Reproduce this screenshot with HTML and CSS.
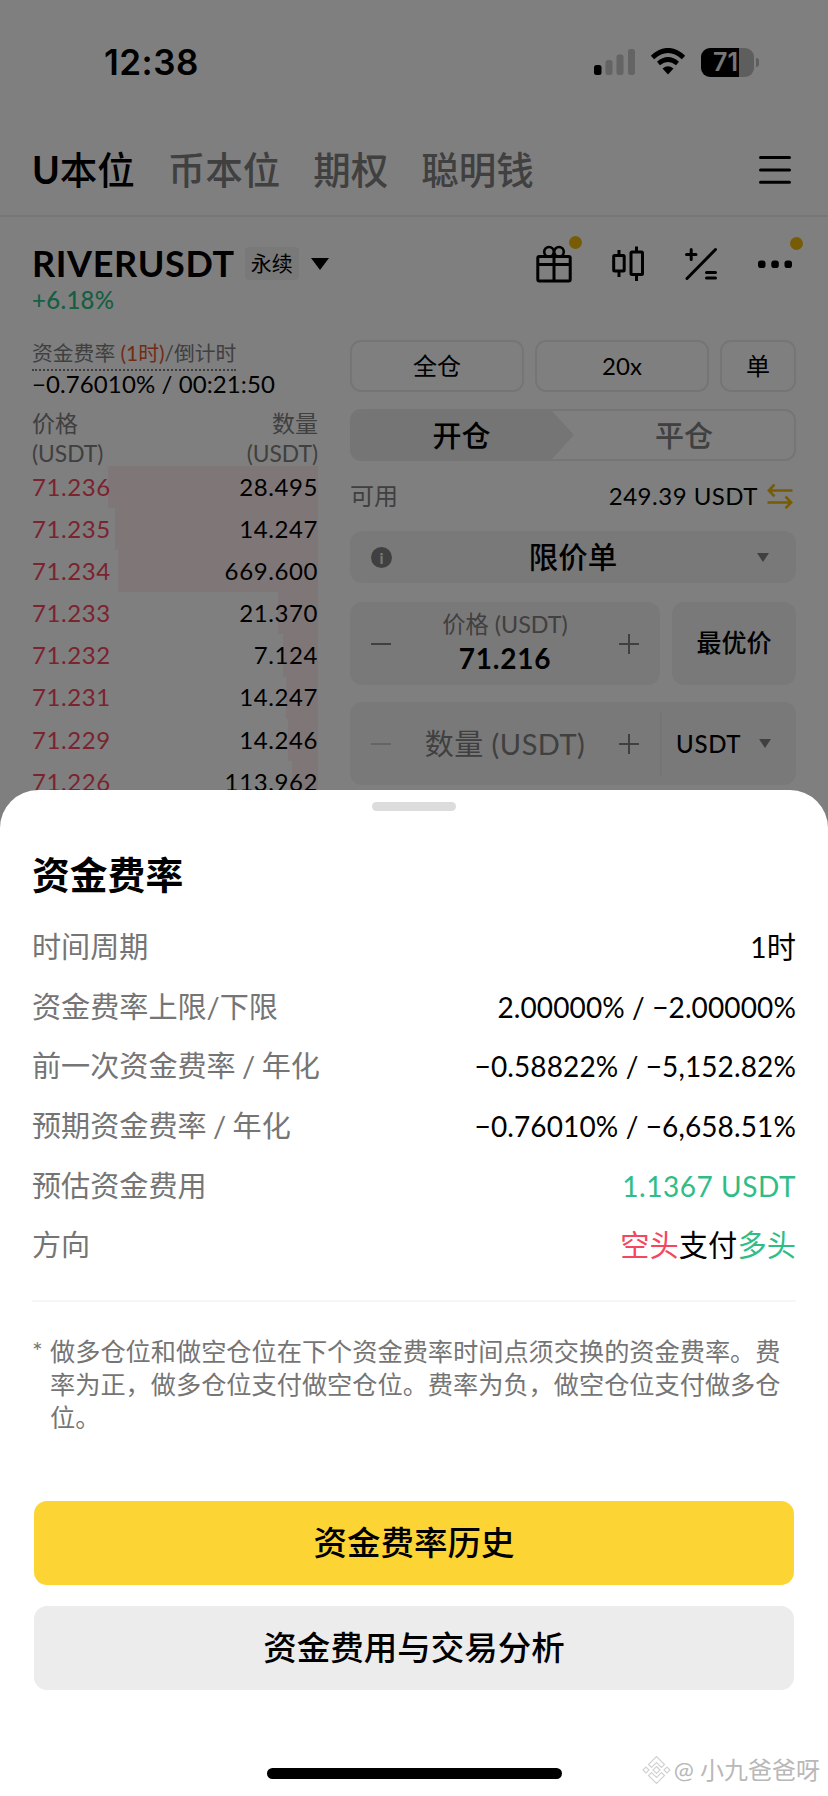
FILE: index.html
```
<!DOCTYPE html>
<html lang="zh-CN">
<head>
    <meta charset="UTF-8">
    <meta name="viewport" content="width=device-width, initial-scale=1.0">
    <title>RIVERUSDT 永续</title>
    <link rel="stylesheet" href="styles.css">
</head>
<body>
    <div class="page">
        <div class="status-bar">
            <span class="time">12:38</span>
            <div class="status-icons">
                <svg class="signal" width="42" height="28" viewBox="0 0 42 28">
                    <rect x="0" y="17" width="7.5" height="10" rx="2.5" fill="#000"/>
                    <rect x="11.5" y="12" width="7" height="15" rx="2.5" fill="#c8c8c8"/>
                    <rect x="22.5" y="6.500" width="7" height="20.500" rx="2.5" fill="#c8c8c8"/>
                    <rect x="34" y="1" width="7" height="26" rx="2.5" fill="#c8c8c8"/>
                </svg>
                <svg class="wifi" width="36" height="28" viewBox="0 0 36 28">
                    <path d="M2.500 9.500Q18-4.500 33.500 9.500" fill="none" stroke="#000" stroke-width="5"/>
                    <path d="M8.500 15.500Q18 7.500 27.500 15.500" fill="none" stroke="#000" stroke-width="4.600"/>
                    <path d="M12.500 20.500Q18 16 23.500 20.500L18 26.500Z" fill="#000"/>
                </svg>
                <div class="battery"><span>71</span></div>
                <div class="battery-cap"></div>
            </div>
        </div>

        <div class="tabs">
            <span class="tab active"><b>U</b>本位</span>
            <span class="tab">币本位</span>
            <span class="tab">期权</span>
            <span class="tab">聪明钱</span>
            <svg class="menu" width="32" height="30" viewBox="0 0 32 30">
                <path d="M1.500 2.500h29M1.500 15h29M1.500 27.200h29" stroke="#000" stroke-width="3" stroke-linecap="round"/>
            </svg>
        </div>

        <div class="pair">
            <div class="pair-left">
                <div class="pair-title">
                    <span class="symbol">RIVERUSDT</span>
                    <span class="tag">永续</span>
                    <span class="caret caret-lg"></span>
                </div>
                <div class="change">+6.18%</div>
            </div>
            <div class="tools">
                <div class="tool">
                    <svg width="36" height="38" viewBox="0 0 36 38" fill="none" stroke="#000" stroke-width="3">
                        <rect x="1.800" y="11.500" width="32.400" height="24.500" rx="1.500"/>
                        <path d="M1.800 19.500h32.400M18 8v28"/>
                        <circle cx="13" cy="6.800" r="4.800" stroke-width="2.600"/>
                        <circle cx="23" cy="6.800" r="4.800" stroke-width="2.600"/>
                    </svg>
                    <i class="dot"></i>
                </div>
                <div class="tool">
                    <svg width="32" height="36" viewBox="0 0 32 36" fill="none" stroke="#000" stroke-width="3">
                        <rect x="1.700" y="9.500" width="10.500" height="15.500" rx="1"/>
                        <path d="M7 4v5M7 25.500v5.500M24.500 .500v5.500M24.500 28.500v6.500"/>
                        <rect x="19" y="6" width="11.500" height="22.500" rx="1"/>
                    </svg>
                </div>
                <div class="tool">
                    <svg width="32" height="34" viewBox="0 0 32 34" fill="none" stroke="#000" stroke-width="3" stroke-linecap="round">
                        <path d="M2 31.500L30.500 2.500M1.500 7.500h9.500M6.200 2.500v10M21.500 25.500h9M21.500 31h9"/>
                    </svg>
                </div>
                <div class="tool">
                    <svg width="36" height="36" viewBox="0 0 36 36">
                        <rect x="1" y="14.500" width="7.500" height="7.500" rx="2.800"/>
                        <rect x="14.300" y="14.500" width="7.500" height="7.500" rx="2.800"/>
                        <rect x="27.500" y="14.500" width="7.500" height="7.500" rx="2.800"/>
                    </svg>
                    <i class="dot"></i>
                </div>
            </div>
        </div>

        <div class="trade">
            <div class="book">
                <div class="funding-label">资金费率 <b>(1时)</b>/倒计时</div>
                <div class="funding-value">−0.76010% / 00:21:50</div>
                <div class="book-head">
                    <div>价格<br><small>(USDT)</small></div>
                    <div class="right">数量<br><small>(USDT)</small></div>
                </div>
                <div class="book-row"><span class="price">71.236</span><span>28.495</span><i style="width: 210px"></i></div>
                <div class="book-row"><span class="price">71.235</span><span>14.247</span><i style="width: 203px"></i></div>
                <div class="book-row"><span class="price">71.234</span><span>669.600</span><i style="width: 200px"></i></div>
                <div class="book-row"><span class="price">71.233</span><span>21.370</span><i style="width: 40px"></i></div>
                <div class="book-row"><span class="price">71.232</span><span>7.124</span><i style="width: 35px"></i></div>
                <div class="book-row"><span class="price">71.231</span><span>14.247</span><i style="width: 32px"></i></div>
                <div class="book-row"><span class="price">71.229</span><span>14.246</span><i style="width: 30px"></i></div>
                <div class="book-row"><span class="price">71.226</span><span>113.962</span><i style="width: 26px"></i></div>
            </div>

            <div class="form">
                <div class="modes">
                    <div class="mode">全仓</div>
                    <div class="mode">20x</div>
                    <div class="mode">单</div>
                </div>
                <div class="sides">
                    <div class="side open">开仓</div>
                    <div class="side close">平仓</div>
                </div>
                <div class="avail">
                    <span class="avail-label">可用</span>
                    <span class="avail-value">249.39 USDT</span>
                    <svg width="26" height="26" viewBox="0 0 26 26" fill="none" stroke="#f0b90b" stroke-width="2.600">
                        <path d="M25.500 7.500H2M7.500 1.500L1.800 7.500L7.500 13.300M.5 19.500H24M18.500 13.500L24.200 19.500L18.500 25.300"/>
                    </svg>
                </div>
                <div class="box order-type">
                    <span class="info">i</span>
                    <span class="order-name">限价单</span>
                    <span class="caret"></span>
                </div>
                <div class="line">
                    <div class="box field">
                        <span class="minus"></span>
                        <div class="price-input">
                            <div class="field-label">价格 (USDT)</div>
                            <div class="field-value">71.216</div>
                        </div>
                        <span class="plus"></span>
                    </div>
                    <div class="box best">最优价</div>
                </div>
                <div class="box qty">
                    <div class="field">
                        <span class="minus faint"></span>
                        <div class="placeholder">数量 (USDT)</div>
                        <span class="plus"></span>
                    </div>
                    <div class="unit">USDT<span class="caret"></span></div>
                </div>
            </div>
        </div>
    </div>

    <div class="mask"></div>

    <!-- Bottom sheet -->
    <div class="sheet">
        <div class="handle"></div>
        <h1>资金费率</h1>
        <div class="row"><span class="label">时间周期</span><span class="value">1<span class="cjk">时</span></span></div>
        <div class="row"><span class="label">资金费率上限/下限</span><span class="value">2.00000% / −2.00000%</span></div>
        <div class="row"><span class="label">前一次资金费率 / 年化</span><span class="value">−0.58822% / −5,152.82%</span></div>
        <div class="row"><span class="label">预期资金费率 / 年化</span><span class="value">−0.76010% / −6,658.51%</span></div>
        <div class="row"><span class="label">预估资金费用</span><span class="value fee green">1.1367 USDT</span></div>
        <div class="row"><span class="label">方向</span><span class="value cjk"><span class="red">空头</span>支付<span class="green">多头</span></span></div>
        <div class="note">
            <span>*</span>
            <p>做多仓位和做空仓位在下个资金费率时间点须交换的资金费率。费率为正，做多仓位支付做空仓位。费率为负，做空仓位支付做多仓位。</p>
        </div>
        <div class="btn btn-primary">资金费率历史</div>
        <div class="btn">资金费用与交易分析</div>
        <div class="home-indicator"></div>
        <div class="watermark">
            <svg width="29" height="30" viewBox="0 0 29 30" fill="none" stroke="#d2d2d2" stroke-width="1.200">
                <path d="M6.500 9.500L14.500 1.500L22.500 9.500L19.500 12.500L14.500 7.500L9.500 12.500ZM6.500 20.500L14.500 28.500L22.500 20.500L19.500 17.500L14.500 22.500L9.500 17.500Z"/>
                <path d="M14.500 11.500L18 15L14.500 18.500L11 15ZM1 15L4 12L7 15L4 18ZM22 15L25 12L28 15L25 18Z"/>
            </svg>
            <span>@ 小九爸爸呀</span>
        </div>
    </div>
</body>
</html>
```
FILE: styles.css
```
* {
    box-sizing: border-box;
}
body {
    margin: 0;
    width: 828px;
    height: 1796px;
    position: relative;
    overflow: hidden;
    background-color: #fff;
    color: #000;
    font-family: Lato, "Noto Sans CJK SC", sans-serif;
    font-size: 24px;
}

/* Status bar */
.status-bar {
    display: flex;
    justify-content: space-between;
    align-items: center;
    height: 124px;
    padding: 0 69px 0 104px;
}
.time {
    font-family: Inter, sans-serif;
    font-size: 35px;
    font-weight: 600;
    letter-spacing: 0.5px;
}
.status-icons {
    display: flex;
    align-items: center;
}
.wifi {
    margin: 0 15px 0 14px;
}
.battery {
    width: 53px;
    height: 29px;
    border-radius: 9px;
    background: linear-gradient(to right, #000 38px, #bcbcbc 38px);
    color: #eee;
    font: 600 25px/29px Inter, sans-serif;
    padding-left: 12px;
}
.battery-cap {
    width: 3px;
    height: 9px;
    margin-left: 2px;
    border-radius: 0 3px 3px 0;
    background-color: #bcbcbc;
}

/* Tabs */
.tabs {
    display: flex;
    align-items: center;
    height: 93px;
    padding: 1px 37px 0 32px;
    border-bottom: 2px solid #eee;
    gap: 33px;
}
.tab {
    font-size: 37.5px;
    line-height: 50px;
    font-weight: 500;
    color: #808080;
}
.tab.active {
    color: #000;
}
.tab b {
    font-weight: 700;
}
.menu {
    margin-left: auto;
}

/* Pair */
.pair {
    display: flex;
    justify-content: space-between;
    height: 123px;
    padding: 25px 35px 0 32px;
}
.pair-title {
    display: flex;
    align-items: center;
    height: 43px;
}
.symbol {
    font-size: 36px;
    line-height: 40px;
    padding-bottom: 2px;
    font-weight: 700;
    letter-spacing: 0.65px;
}
.tag {
    height: 33px;
    margin: 0 12px 0 10px;
    padding: 0 6px;
    border-radius: 4px;
    background-color: #f3f3f3;
    font-size: 21px;
    line-height: 32px;
}
.caret {
    border: 6.5px solid transparent;
    border-top: 9px solid #808080;
    border-bottom: 0;
}
.caret-lg {
    border-width: 12px 9.5px 0;
    border-top-color: #000;
}
.change {
    height: 30px;
    font-size: 24px;
    line-height: 30px;
    letter-spacing: 0.3px;
    color: #2ebd85;
    font-weight: 500;
}
.tools {
    display: flex;
    align-items: center;
    height: 43px;
    gap: 40.5px;
}
.tool {
    position: relative;
    display: flex;
}
.tool .dot {
    position: absolute;
    top: -9px;
    right: -10px;
    width: 13px;
    height: 13px;
    border-radius: 50%;
    background-color: #f0b90b;
}

/* Trade area */
.trade {
    display: flex;
    gap: 32px;
    padding: 0 32px;
}
.book {
    width: 286px;
}
.funding-label {
    display: block;
    width: fit-content;
    height: 31px;
    border-bottom: 2px dotted #808080;
    font-size: 20.8px;
    line-height: 26px;
    color: #808080;
    white-space: nowrap;
}
.funding-label b {
    font-weight: 400;
    color: #e4572e;
}
.funding-value {
    height: 27px;
    line-height: 26px;
    letter-spacing: 0.1px;
    white-space: nowrap;
}
.book-head {
    display: flex;
    justify-content: space-between;
    height: 68px;
    padding-top: 10px;
    font-size: 23px;
    line-height: 30px;
    color: #808080;
}
.book-head small {
    font-size: 22.8px;
}
.right {
    text-align: right;
}
.book-row {
    position: relative;
    display: flex;
    justify-content: space-between;
    height: 42.1px;
    line-height: 42px;
    font-size: 24px;
    letter-spacing: 0.6px;
}
.book-row i {
    position: absolute;
    top: 0;
    right: 0;
    z-index: -1;
    height: 42.2px;
    background-color: #ffecee;
}
.price {
    color: #f6465d;
}

.form {
    width: 446px;
}
.modes {
    display: grid;
    grid-template-columns: 174px 174px 76px;
    gap: 11px;
}
.mode {
    height: 52px;
    border: 2px solid #eaeaea;
    border-radius: 11px;
    text-align: center;
    line-height: 48px;
}
.sides {
    display: flex;
    height: 52px;
    margin-top: 17px;
    border: 2px solid #eaeaea;
    border-radius: 11px;
    overflow: hidden;
    font-size: 29px;
    line-height: 49px;
    font-weight: 500;
    text-align: center;
}
.open {
    width: 223px;
    padding-right: 3px;
    background-color: #eaeaea;
    clip-path: polygon(0 0, 200px 0, 100% 50%, 200px 100%, 0 100%);
}
.close {
    width: 221px;
    color: #808080;
}
.avail {
    display: flex;
    align-items: center;
    height: 70px;
    padding-right: 3px;
    line-height: 32px;
}
.avail-label {
    color: #808080;
}
.avail-value {
    margin-left: auto;
    margin-right: 9px;
    letter-spacing: 0.5px;
}
.box {
    border-radius: 12px;
    background-color: #f3f3f3;
}
.order-type {
    display: flex;
    align-items: center;
    justify-content: space-between;
    height: 52px;
    padding: 0 27px 0 21px;
}
.order-name {
    margin-right: 3px;
    font-size: 29.5px;
    line-height: 52px;
    font-weight: 500;
}
.info {
    width: 21px;
    height: 21px;
    border-radius: 50%;
    background-color: #808080;
    color: #f3f3f3;
    font: 700 16px/21px Lato, sans-serif;
    text-align: center;
}
.line {
    display: flex;
    gap: 12px;
    margin: 19px 0 17px;
}
.field {
    display: flex;
    align-items: center;
    justify-content: space-between;
    width: 310px;
    height: 83px;
    padding: 0 21px;
}
.price-input {
    text-align: center;
    padding-bottom: 6px;
}
.field-label {
    font-size: 23.3px;
    line-height: 34px;
    color: #808080;
}
.field-value {
    font-size: 28px;
    line-height: 34px;
    font-weight: 700;
    letter-spacing: 0.8px;
}
.minus,
.plus {
    width: 20px;
    height: 20px;
    background: linear-gradient(#808080, #808080) center / 20px 2px no-repeat;
}
.plus {
    background: linear-gradient(#808080, #808080) center / 20px 2px no-repeat, linear-gradient(#808080, #808080) center / 2px 20px no-repeat;
}
.faint {
    opacity: 0.35;
}
.best {
    width: 124px;
    font-size: 25px;
    font-weight: 500;
    line-height: 81px;
    text-align: center;
}
.qty {
    display: flex;
    align-items: center;
    height: 83px;
}
.placeholder {
    font-size: 29px;
    line-height: 40px;
    letter-spacing: 0.5px;
    color: #808080;
}
.unit {
    display: flex;
    align-items: center;
    justify-content: space-between;
    flex: 1;
    height: 65px;
    padding: 0 25px 0 14px;
    border-left: 2px solid #eaeaea;
    font-weight: 500;
    letter-spacing: 0.7px;
}

.mask {
    position: absolute;
    inset: 0;
    background-color: rgba(0, 0, 0, 0.5);
}

/* Bottom sheet */
.sheet {
    position: absolute;
    left: 0;
    right: 0;
    top: 790px;
    bottom: 0;
    padding: 12px 32px 0;
    border-radius: 38px 38px 0 0;
    background-color: #fff;
}
.handle {
    width: 84px;
    height: 9px;
    margin: 0 auto;
    border-radius: 5px;
    background-color: #dcdcdc;
}
.sheet h1 {
    margin: 38px 0 16px;
    font-size: 37.8px;
    line-height: 52px;
    font-weight: 700;
}
.row {
    display: flex;
    justify-content: space-between;
    align-items: center;
    height: 59.7px;
    font-size: 29.1px;
    line-height: 40px;
}
.label {
    color: #757575;
    word-spacing: -1px;
}
.value {
    font-size: 28px;
    letter-spacing: 0.12px;
}
.value.fee {
    letter-spacing: 0.55px;
}
.cjk,
.value.cjk {
    font-size: 29.2px;
}
.green {
    color: #2ebd85;
}
.red {
    color: #f6465d;
}
.note {
    display: flex;
    gap: 8px;
    height: 201px;
    margin-top: 25px;
    padding-top: 33px;
    border-top: 2px solid #f6f6f6;
    font-size: 25.2px;
    line-height: 33px;
    color: #757575;
}
.note span {
    width: 10px;
}
.note p {
    width: 737px;
    margin: 0;
}
.btn {
    height: 84px;
    margin: 0 2px 21px;
    border-radius: 13px;
    background-color: #ececec;
    font-size: 33.5px;
    font-weight: 500;
    line-height: 82px;
    text-align: center;
}
.btn-primary {
    background-color: #fcd535;
}
.home-indicator {
    width: 295px;
    height: 11px;
    margin: 78px auto 0;
    border-radius: 6px;
    background-color: #000;
}
.watermark {
    position: absolute;
    right: 8px;
    bottom: 9px;
    display: flex;
    align-items: center;
    gap: 3px;
    color: #b8b8b8;
    font-size: 24px;
    line-height: 34px;
}
```
